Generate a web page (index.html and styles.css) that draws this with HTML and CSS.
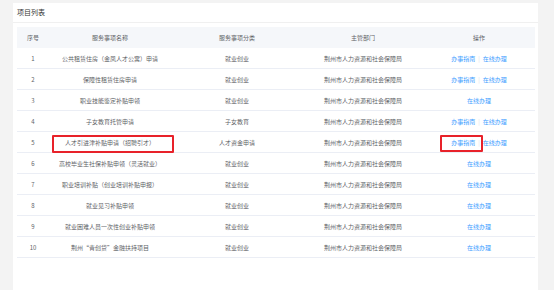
FILE: index.html
```html
<!DOCTYPE html>
<html lang="zh-CN">
<head>
<meta charset="utf-8">
<link rel="stylesheet" href="styles.css">
</head>
<body>
<div class="page">
  <div class="card">
    <div class="card-title">项目列表</div>
    <div class="table-wrap">
      <table class="grid">
        <colgroup>
          <col class="c1"><col class="c2"><col class="c3"><col class="c4"><col class="c5">
        </colgroup>
        <thead>
          <tr><th>序号</th><th>服务事项名称</th><th>服务事项分类</th><th>主管部门</th><th>操作</th></tr>
        </thead>
        <tbody>
          <tr><td>1</td><td>公共租赁住房（金凤人才公寓）申请</td><td>就业创业</td><td>荆州市人力资源和社会保障局</td><td><a>办事指南</a><span class="sep">|</span><a>在线办理</a></td></tr>
          <tr><td>2</td><td>保障性租赁住房申请</td><td>就业创业</td><td>荆州市人力资源和社会保障局</td><td><a>办事指南</a><span class="sep">|</span><a>在线办理</a></td></tr>
          <tr><td>3</td><td>职业技能鉴定补贴申领</td><td>就业创业</td><td>荆州市人力资源和社会保障局</td><td><a>在线办理</a></td></tr>
          <tr><td>4</td><td>子女教育托管申请</td><td>子女教育</td><td>荆州市人力资源和社会保障局</td><td><a>办事指南</a><span class="sep">|</span><a>在线办理</a></td></tr>
          <tr><td>5</td><td class="mark-cell">人才引进津补贴申请（招聘引才）<span class="mark mark-name"></span></td><td>人才资金申请</td><td>荆州市人力资源和社会保障局</td><td class="mark-cell"><a>办事指南</a><span class="sep">|</span><a>在线办理</a><span class="mark mark-op"></span></td></tr>
          <tr><td>6</td><td>高校毕业生社保补贴申领（灵活就业）</td><td>就业创业</td><td>荆州市人力资源和社会保障局</td><td><a>在线办理</a></td></tr>
          <tr><td>7</td><td>职业培训补贴（创业培训补贴申报）</td><td>就业创业</td><td>荆州市人力资源和社会保障局</td><td><a>在线办理</a></td></tr>
          <tr><td>8</td><td>就业见习补贴申领</td><td>就业创业</td><td>荆州市人力资源和社会保障局</td><td><a>在线办理</a></td></tr>
          <tr><td>9</td><td>就业困难人员一次性创业补贴申领</td><td>就业创业</td><td>荆州市人力资源和社会保障局</td><td><a>在线办理</a></td></tr>
          <tr><td>10</td><td>荆州“青创贷”金融扶持项目</td><td>就业创业</td><td>荆州市人力资源和社会保障局</td><td><a>在线办理</a></td></tr>
        </tbody>
      </table>
    </div>
  </div>
</div>
</body>
</html>
```
FILE: styles.css
```css
html, body {
  margin: 0;
  padding: 0;
  height: 100%;
}
body {
  background: #f3f3f3;
  font-family: "Noto Sans CJK SC", "Noto Sans", sans-serif;
  color: #606266;
}
.page {
  box-sizing: border-box;
  height: 100%;
  padding: 3px 16px 0 13px;
}
.card {
  background: #fff;
  height: 100%;
}
.card-title {
  height: 19px;
  line-height: 19px;
  padding-left: 4px;
  font-size: 7px;
  color: #333;
  border-bottom: 1px solid #f0f0f0;
}
.table-wrap {
  padding: 4px 3px 0 4px;
}
.grid {
  width: 518px;
  border-collapse: collapse;
  table-layout: fixed;
  font-size: 6px;
}
.c1 { width: 32px; }
.c2 { width: 122px; }
.c3 { width: 132px; }
.c4 { width: 120px; }
.c5 { width: 112px; }
.grid th {
  background: #f5f7fa;
  height: 21px;
  padding: 0;
  font-weight: normal;
  color: #606266;
  text-align: center;
}
.grid td {
  height: 20px;
  padding: 0;
  text-align: center;
  border-bottom: 1px solid #ebeef5;
  white-space: nowrap;
}
.grid a {
  color: #409eff;
}
.sep {
  color: #dcdfe6;
  margin: 0 3px;
}
.mark-cell {
  position: relative;
}
.mark {
  position: absolute;
  box-sizing: border-box;
  border: 2px solid #e8222a;
  border-radius: 1px;
}
.mark-name {
  left: 3px;
  top: 3px;
  width: 122px;
  height: 18px;
}
.mark-op {
  left: 17px;
  top: 3px;
  width: 43px;
  height: 17px;
}
```
